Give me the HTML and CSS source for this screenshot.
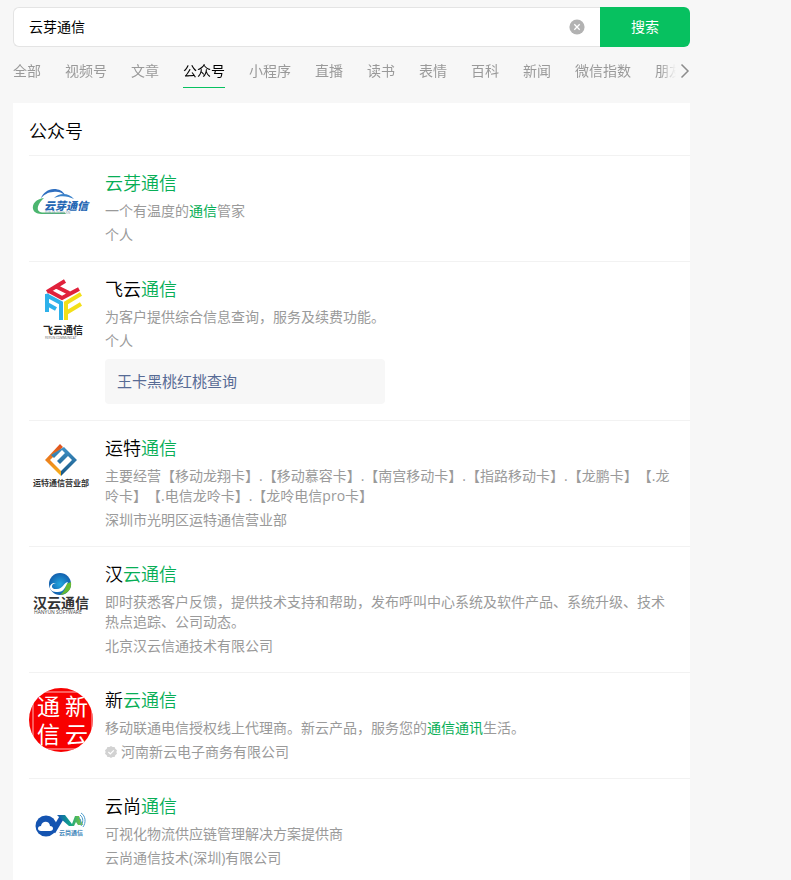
FILE: index.html
```html
<!DOCTYPE html>
<html lang="zh-CN">
<head>
  <meta charset="UTF-8" />
  <meta name="viewport" content="width=device-width, initial-scale=1.0" />
  <title>云芽通信 - 搜索</title>
  <link rel="stylesheet" href="styles.css">
</head>
<body>
  <div class="page">
    <form class="search-bar">
      <div class="search-field">
        <input type="text" class="search-input" value="云芽通信" aria-label="搜索">
        <button type="reset" class="clear-btn" aria-label="清除">
          <svg width="16" height="16" viewBox="0 0 16 16"><circle cx="8" cy="8" r="7.6" fill="#b2b2b2"/><path d="M5.3 5.3l5.4 5.4M10.7 5.3l-5.4 5.4" stroke="#fff" stroke-width="1.3"/></svg>
        </button>
      </div>
      <button type="submit" class="search-btn">搜索</button>
    </form>

    <nav class="tabs">
      <div class="tab-list">
        <a href="#" class="tab">全部</a>
        <a href="#" class="tab">视频号</a>
        <a href="#" class="tab">文章</a>
        <a href="#" class="tab active">公众号</a>
        <a href="#" class="tab">小程序</a>
        <a href="#" class="tab">直播</a>
        <a href="#" class="tab">读书</a>
        <a href="#" class="tab">表情</a>
        <a href="#" class="tab">百科</a>
        <a href="#" class="tab">新闻</a>
        <a href="#" class="tab">微信指数</a>
        <a href="#" class="tab">朋友圈</a>
      </div>
      <button type="button" class="tab-next" aria-label="更多">
        <svg width="10" height="16" viewBox="0 0 10 16"><path d="M1.5 1.5L8 8l-6.500 6.500" fill="none" stroke="#8c8c8c" stroke-width="1.5"/></svg>
      </button>
    </nav>

    <main class="card">
      <h2 class="card-title">公众号</h2>

      <div class="item">
        <svg class="logo" viewBox="0 0 64 64">
          <path d="M12 27C14 22 19 18 25 18c5 0 9 2 11 6-4-3-8-4-12-3-5 0-9 3-12 6z" fill="#2f6fc0"/>
          <path d="M25 27c5-5 14-6 20 1-6-3-13-4-20-1z" fill="#3b82ca"/>
          <path d="M15 27C7 28 3 33 4 38c1 4 5 5 10 5h23l-1-1.500H15c-5 0-7-2-6-6 1-3 3-6 6-8.500z" fill="#4cb56f"/>
          <text x="15" y="38.500" font-size="11" font-weight="900" font-style="italic" fill="#2466b3">云芽通信</text>
          <text x="16" y="43" font-size="3" fill="#7892a8">YUN  YA  TONG  XIN</text>
        </svg>
        <div class="info">
          <h3 class="name"><a href="#"><em>云芽通信</em></a></h3>
          <p class="desc">一个有温度的<em>通信</em>管家</p>
          <p class="source">个人</p>
        </div>
      </div>

      <div class="item">
        <svg class="logo" viewBox="0 0 64 64">
          <g fill="none" stroke-width="4">
            <path d="M18 15L36 4M20 14l13 7 17-9M26 9l14 7" stroke="#e0213b"/>
            <path d="M18 17v18M17 18l15 8v17M18 27l9 5" stroke="#2eb1ea"/>
            <path d="M37 43V26l15-9M37 36l15-9" stroke="#f3df18"/>
          </g>
          <text x="14" y="57" font-size="10" font-weight="700" fill="#222">飞云通信</text>
          <text x="16" y="62" font-size="3" fill="#555">FEIYUN COMMUNICAT</text>
        </svg>
        <div class="info">
          <h3 class="name"><a href="#">飞云<em>通信</em></a></h3>
          <p class="desc">为客户提供综合信息查询，服务及续费功能。</p>
          <p class="source">个人</p>
          <a href="#" class="quick-link">王卡黑桃红桃查询</a>
        </div>
      </div>

      <div class="item">
        <svg class="logo" viewBox="0 0 64 64">
          <defs>
            <linearGradient id="orange" x1="0" y1="0" x2="0" y2="1"><stop offset="0" stop-color="#df4d1d"/><stop offset="1" stop-color="#f8b51d"/></linearGradient>
            <linearGradient id="steel" x1="0" y1="0" x2="0" y2="1"><stop offset="0" stop-color="#4093c8"/><stop offset="1" stop-color="#155482"/></linearGradient>
          </defs>
          <path d="M31 8l3 3-13 13 11 11v5L16 24z" fill="url(#orange)"/>
          <path d="M35 11l13 13-16 16v-5l11-11-4-4-8 8-3-3 8-8-3-3-8 8-3-3z" fill="url(#steel)"/>
          <text x="4" y="50" font-size="8" font-weight="700" fill="#333">运特通信营业部</text>
        </svg>
        <div class="info">
          <h3 class="name"><a href="#">运特<em>通信</em></a></h3>
          <p class="desc">主要经营【移动龙翔卡】.【移动慕容卡】.【南宫移动卡】.【指路移动卡】.【龙鹏卡】【.龙呤卡】【.电信龙呤卡】.【龙呤电信pro卡】</p>
          <p class="source">深圳市光明区运特通信营业部</p>
        </div>
      </div>

      <div class="item">
        <svg class="logo" viewBox="0 0 64 64">
          <defs><radialGradient id="globe"><stop offset="0" stop-color="#24a7df"/><stop offset="1" stop-color="#1260ae"/></radialGradient></defs>
          <circle cx="31" cy="22" r="11" fill="url(#globe)"/>
          <path d="M42 20c1 7-3 12-11 13 4-3 6-7 6-11z" fill="#67ba32"/>
          <path d="M27 21c-6 1-5 7 1 6 6 0 6-6 11-7-3 5-4 11-12 10-9-1-7-10 0-9z" fill="#fff"/>
          <text x="4" y="46" font-size="14" font-weight="700" fill="#333">汉云通信</text>
          <text x="5" y="52" font-size="5" fill="#444">HANYUN SOFTWARE</text>
        </svg>
        <div class="info">
          <h3 class="name"><a href="#">汉<em>云通信</em></a></h3>
          <p class="desc">即时获悉客户反馈，提供技术支持和帮助，发布呼叫中心系统及软件产品、系统升级、技术热点追踪、公司动态。</p>
          <p class="source">北京汉云信通技术有限公司</p>
        </div>
      </div>

      <div class="item">
        <svg class="logo" viewBox="0 0 64 64">
          <defs><clipPath id="seal"><circle cx="32" cy="32" r="32"/></clipPath></defs>
          <g clip-path="url(#seal)">
            <path d="M0 0h64v64H0z" fill="#f80000"/>
            <path d="M4 4h59v57H4z" fill="none" stroke="#ffb9b9"/>
            <g font-size="23" fill="#fff">
              <text x="8" y="27">通</text>
              <text x="36" y="27">新</text>
              <text x="8" y="55">信</text>
              <text x="36" y="55">云</text>
            </g>
          </g>
        </svg>
        <div class="info">
          <h3 class="name"><a href="#">新<em>云通信</em></a></h3>
          <p class="desc">移动联通电信授权线上代理商。新云产品，服务您的<em>通信通讯</em>生活。</p>
          <p class="source verified">
            <svg width="12" height="12" viewBox="0 0 12 12"><path d="M6 0l1.600 1.100 2-.1.700 1.800L12 4.200 11.400 6l.6 1.800-1.700 1.400-.7 1.800-2-.1L6 12l-1.600-1.100-2 .1-.7-1.800L0 7.800.6 6 0 4.200l1.700-1.400L2.400 1l2 .1z" fill="#d2d2d2"/><path d="M3.400 6l1.900 1.900 3.500-3.600" fill="none" stroke="#fff" stroke-width="1.200"/></svg>
            河南新云电子商务有限公司
          </p>
        </div>
      </div>

      <div class="item">
        <svg class="logo" viewBox="0 0 64 64">
          <defs><linearGradient id="wave" x1="0" x2="1"><stop offset="0" stop-color="#1454b1"/><stop offset=".5" stop-color="#10a58b"/><stop offset="1" stop-color="#8bca31"/></linearGradient></defs>
          <circle cx="17" cy="32" r="10.500" fill="#1454b1"/>
          <path d="M24 38l9-15" fill="none" stroke="#1454b1" stroke-width="5"/>
          <path d="M28 21h8l7 9 3-8h4l4 9h-5l-2-3-2 4h-5l-8-7z" fill="url(#wave)"/>
          <path d="M12 37c-4 0-4-5 0-5 1-6 9-5 9 0 4 0 4 5 0 5z" fill="#fff"/>
          <path d="M50 24c2 1 2 4 1 6M51 21c4 3 3 8 1 11M52 19c5 3 5 10 2 14" fill="none" stroke="#4a9ccc"/>
          <text x="30" y="41" font-size="6" font-weight="700" fill="#3b83b8">云尚通信</text>
        </svg>
        <div class="info">
          <h3 class="name"><a href="#">云尚<em>通信</em></a></h3>
          <p class="desc">可视化物流供应链管理解决方案提供商</p>
          <p class="source">云尚通信技术(深圳)有限公司</p>
        </div>
      </div>
    </main>
  </div>
</body>
</html>
```
FILE: styles.css
```css
* {
  box-sizing: border-box;
}
body {
  margin: 0;
  background-color: #f7f7f7;
  color: #000;
  font-family: "Open Sans", "Noto Sans CJK SC", sans-serif;
  font-size: 14px;
  line-height: 20px;
  text-spacing-trim: space-all;
  overflow-x: hidden;
}
h2, h3, p {
  margin: 0;
  font-weight: inherit;
}
a {
  color: inherit;
  text-decoration: none;
}
em {
  font-style: normal;
  color: #07ae56;
}
button, input {
  font: inherit;
  border: none;
  padding: 0;
}
button {
  background: none;
  cursor: pointer;
}
svg {
  display: block;
}
.page {
  max-width: 690px;
  padding: 7px 0 0 13px;
}
.search-bar {
  display: flex;
  height: 40px;
}
.search-field {
  flex: 1;
  display: flex;
  align-items: center;
  padding: 0 15px;
  background-color: #fff;
  border: 1px solid #e4e4e4;
  border-right: none;
  border-radius: 6px 0 0 6px;
}
.search-input {
  flex: 1;
  min-width: 0;
  background: none;
  outline: none;
  color: #000;
}
.search-btn {
  width: 90px;
  background-color: #07c160;
  color: #fff;
  border-radius: 0 6px 6px 0;
}
.tabs {
  display: flex;
  align-items: flex-start;
  gap: 4px;
  margin-top: 14px;
}
.tab-list {
  flex: 1;
  min-width: 0;
  display: flex;
  gap: 24px;
  overflow: hidden;
  -webkit-mask-image: linear-gradient(to left, transparent, #000 16px);
  mask-image: linear-gradient(to left, transparent, #000 16px);
}
.tab {
  flex-shrink: 0;
  height: 27px;
  color: #9a9a9a;
}
.tab.active {
  color: #000;
  border-bottom: 1px solid #07c160;
}
.tab-next {
  margin-top: 2px;
}
.card {
  margin-top: 15px;
  padding-left: 16px;
  background-color: #fff;
}
.card-title {
  padding: 16px 0 12px;
  font-size: 18px;
  font-weight: 350;
  line-height: 24px;
}
.item {
  display: flex;
  gap: 12px;
  padding: 15px 16px 16px 0;
  border-top: 1px solid #f2f2f2;
}
.logo {
  flex-shrink: 0;
  width: 64px;
  height: 64px;
}
.info {
  flex: 1;
  min-width: 0;
}
.name {
  font-size: 18px;
  font-weight: 350;
  line-height: 24px;
}
.desc {
  margin-top: 6px;
  color: #9a9a9a;
}
.source {
  margin-top: 4px;
  color: #9a9a9a;
}
.verified {
  display: flex;
  align-items: center;
  gap: 4px;
}
.quick-link {
  display: block;
  width: 280px;
  max-width: 100%;
  margin-top: 8px;
  padding: 0 12px;
  font-size: 15px;
  line-height: 45px;
  color: #576b95;
  background-color: #f7f7f7;
  border-radius: 4px;
}
```
